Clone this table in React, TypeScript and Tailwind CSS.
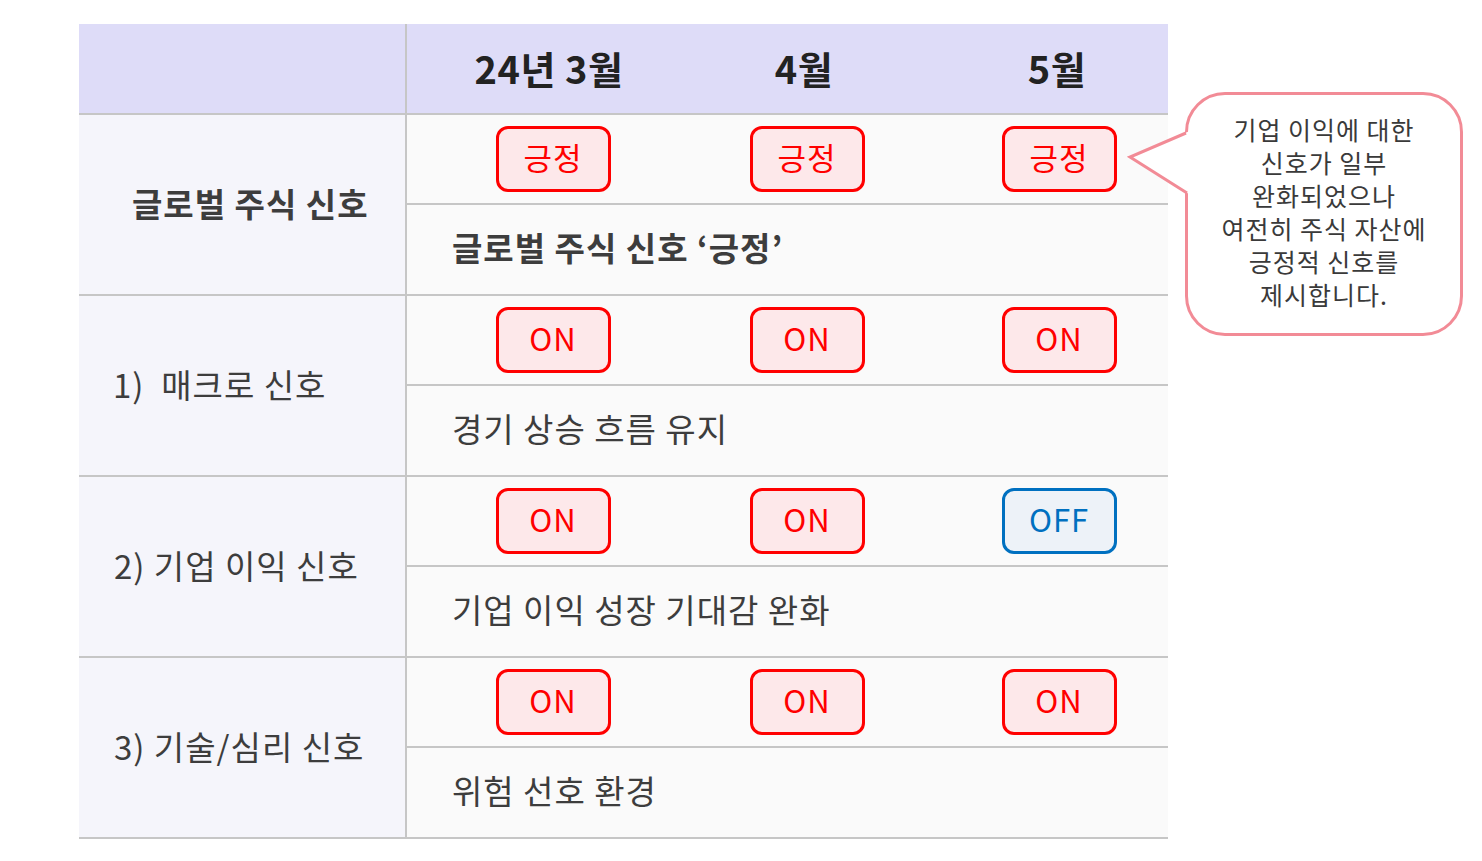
import React from "react";

type Badge = { label: string; off?: boolean };

const COLS = "grid grid-cols-[254px_254px_234px] pl-[19px]";

function BadgeBox({ b }: { b: Badge }) {
  return (
    <div
      className={
        b.off
          ? "w-[115px] h-[66px] rounded-[12px] border-[3px] border-[#0070c0] bg-[#edf2f8] text-[#0070c0] flex items-center justify-center text-[31px] tracking-[1px] leading-none"
          : "w-[115px] h-[66px] rounded-[12px] border-[3px] border-[#ff0000] bg-[#fde8ea] text-[#ff0000] flex items-center justify-center text-[31px] tracking-[1px] leading-none"
      }
    >
      <span className="-mt-[5px]">{b.label}</span>
    </div>
  );
}

function Group({
  label,
  bold,
  pl,
  badges,
  note,
}: {
  label: string;
  bold?: boolean;
  pl: string;
  badges: Badge[];
  note: string;
}) {
  return (
    <div className="flex h-[181px] border-b-2 border-[#c6c6c6]">
      <div
        className={
          "w-[328px] shrink-0 border-r-2 border-[#c6c6c6] bg-[#f5f5fb] flex items-center text-[33px] tracking-[1px] text-[#3d3d3d] whitespace-pre " +
          pl +
          (bold ? " font-bold" : " font-normal")
        }
      >
        <span className="-mt-[1px]">{label}</span>
      </div>
      <div className="flex-1 flex flex-col bg-[#fafafa]">
        <div className="h-[90px] border-b-2 border-[#c6c6c6]">
          <div className={COLS + " h-full items-center"}>
            <div className="flex justify-center">
              <BadgeBox b={badges[0]} />
            </div>
            <div className="flex justify-center">
              <BadgeBox b={badges[1]} />
            </div>
            <div className="flex justify-center pl-[16px]">
              <BadgeBox b={badges[2]} />
            </div>
          </div>
        </div>
        <div
          className={
            "flex-1 flex items-center pl-[45px] text-[33px] tracking-[1px] text-[#3d3d3d] " +
            (bold ? "font-bold" : "font-normal")
          }
        >
          <span className="-mt-[3px]">{note}</span>
        </div>
      </div>
    </div>
  );
}

export default function App() {
  const on: Badge = { label: "ON" };
  const pos: Badge = { label: "긍정" };
  return (
    <div className="relative w-[1482px] h-[861px] bg-white font-['Noto_Sans_CJK_KR','Noto_Sans',sans-serif] overflow-hidden">
      <div className="pt-[24px] pl-[79px]">
        <div className="w-[1089px]">
          <div className="flex h-[91px] border-b-2 border-[#c6c6c6] bg-[#dedcf8]">
            <div className="w-[328px] shrink-0 border-r-2 border-[#c6c6c6]" />
            <div className={"flex-1 " + COLS + " items-center text-[38px] tracking-[0.5px] font-bold text-[#222222]"}>
              <div className="text-center pr-[8px] -mt-[2px]">24년 3월</div>
              <div className="text-center pr-[6px] -mt-[2px]">4월</div>
              <div className="text-center pl-[12px] -mt-[2px]">5월</div>
            </div>
          </div>
          <Group
            label="글로벌 주식 신호"
            bold
            pl="pl-[53px]"
            badges={[pos, pos, pos]}
            note="글로벌 주식 신호 ‘긍정’"
          />
          <Group
            label={"1)  매크로 신호"}
            pl="pl-[34px]"
            badges={[on, on, on]}
            note="경기 상승 흐름 유지"
          />
          <Group
            label="2) 기업 이익 신호"
            pl="pl-[35px]"
            badges={[on, on, { label: "OFF", off: true }]}
            note="기업 이익 성장 기대감 완화"
          />
          <Group
            label="3) 기술/심리 신호"
            pl="pl-[35px]"
            badges={[on, on, on]}
            note="위험 선호 환경"
          />
        </div>
      </div>

      <div className="absolute left-[1185px] top-[92px] w-[278px] h-[244px] rounded-[40px] border-[3px] border-[#f28b96] bg-white flex items-center justify-center">
        <div className="text-center text-[25px] tracking-[1px] leading-[33px] text-[#3a3a3a] -mt-[4px]">
          <div>기업 이익에 대한</div>
          <div>신호가 일부</div>
          <div>완화되었으나</div>
          <div>여전히 주식 자산에</div>
          <div>긍정적 신호를</div>
          <div>제시합니다.</div>
        </div>
      </div>
      <svg
        className="absolute left-[1126px] top-[126px]"
        width="68"
        height="76"
        viewBox="0 0 68 76"
      >
        <polygon points="4,31 66,4 66,70" fill="#ffffff" />
        <polyline
          points="60,7 4,31 61,67"
          fill="none"
          stroke="#f28b96"
          strokeWidth="3"
          strokeLinejoin="miter"
        />
      </svg>
    </div>
  );
}
